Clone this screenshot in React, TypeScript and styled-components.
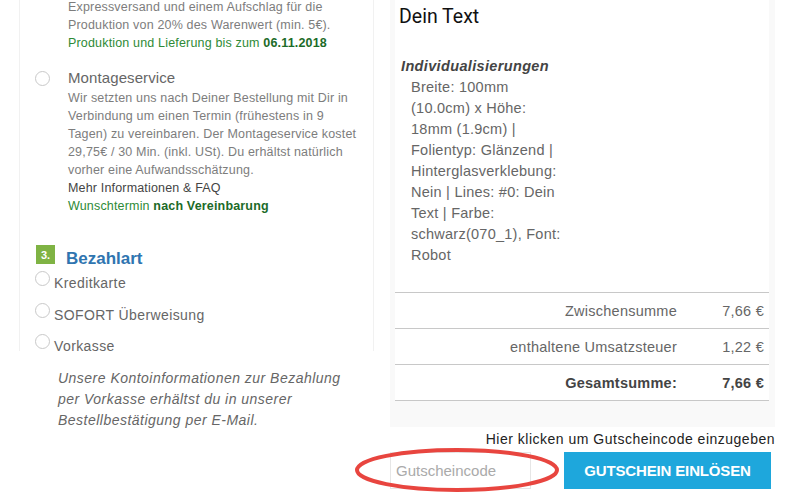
import React from "react";
import styled, { createGlobalStyle } from "styled-components";

const GlobalStyle = createGlobalStyle`
    html, body {
        margin: 0;
        padding: 0;
        background: #fff;
    }
    * {
        box-sizing: border-box;
    }
`;

const Page = styled.div`
    position: relative;
    display: flex;
    width: 800px;
    height: 499px;
    overflow: hidden;
    font-family: "Liberation Sans", Arial, sans-serif;
    color: #7d7d7d;
`;

const LeftColumn = styled.div`
    width: 390px;
    flex: none;
    padding-left: 19px;
`;

const OptionsPanel = styled.div`
    width: 355px;
    height: 353px;
    margin-top: -2px;
    padding-left: 15px;
    border-left: 1px solid #f1f1f1;
    border-right: 1px solid #f1f1f1;
`;

const Option = styled.div`
    display: flex;
    margin-bottom: 17px;
`;

const Radio = styled.span`
    flex: none;
    display: block;
    width: 15px;
    height: 15px;
    border: 1px solid #c9c9c9;
    border-radius: 50%;
    background: #fff;
`;

const OptionRadioSlot = styled.div`
    width: 33px;
    flex: none;
    padding-top: 2px;
`;

const OptionBody = styled.div`
    font-size: 12.5px;
    line-height: 18px;
    letter-spacing: 0.17px;
`;

const OptionTitle = styled.div`
    margin-bottom: 3px;
    font-size: 15px;
    line-height: 17px;
    letter-spacing: 0.1px;
    color: #666;
`;

const Link = styled.div`
    color: #444;
`;

const Green = styled.div`
    color: #2e8a36;

    b {
        color: #1c6b28;
    }
`;

const SectionHead = styled.div`
    display: flex;
    align-items: flex-start;
    height: 25px;
    margin-top: 31px;
    margin-left: 1px;
`;

const StepBadge = styled.span`
    flex: none;
    display: flex;
    align-items: center;
    justify-content: center;
    width: 19px;
    height: 19px;
    margin-top: -1px;
    background: #7fb344;
    color: #fff;
    font-size: 11px;
    font-weight: 700;
`;

const SectionTitle = styled.h3`
    margin: 3px 0 0 11px;
    font-size: 17px;
    line-height: 19px;
    font-weight: 700;
    color: #2f75b0;
`;

const PayRow = styled.div`
    display: flex;
    height: 31.5px;
    font-size: 14px;
    color: #666;

    span:last-child {
        margin: 4px 0 0 4px;
        letter-spacing: 0.4px;
    }
`;

const PayNote = styled.p`
    margin: 17px 0 0 39px;
    width: 290px;
    font-size: 14px;
    font-style: italic;
    line-height: 21px;
    letter-spacing: 0.48px;
    color: #666;
`;

const RightColumn = styled.div`
    width: 385px;
    flex: none;
`;

const Summary = styled.div`
    height: 427px;
    padding: 0 6px 0 5px;
    background: #f9f9f9;
`;

const ItemCard = styled.div`
    height: 292px;
    padding: 6px 5px 0 4px;
    background: #fff;
`;

const ItemTitle = styled.div`
    font-family: Roboto, "Liberation Sans", sans-serif;
    font-size: 19.5px;
    line-height: 22px;
    color: #111;
`;

const Details = styled.div`
    margin-top: 28px;
    font-size: 14.5px;
    line-height: 21px;
`;

const DetailsHead = styled.div`
    margin-left: 2px;
    font-weight: 700;
    font-style: italic;
    letter-spacing: 0.35px;
    color: #444;
`;

const DetailsText = styled.div`
    width: 153px;
    margin-left: 12px;
    letter-spacing: 0.25px;
    color: #666;
`;

const TotalRow = styled.div<{ $strong?: boolean }>`
    display: flex;
    justify-content: flex-end;
    align-items: center;
    height: 36px;
    border-bottom: 1px solid #c8c8c8;
    background: #fff;
    font-size: 14.5px;
    letter-spacing: 0.25px;
    font-weight: ${(props) => (props.$strong ? 700 : 400)};
    color: ${(props) => (props.$strong ? "#444" : "#666")};

    &:first-child {
        height: 37px;
        border-top: 1px solid #c8c8c8;
    }

    span:last-child {
        width: 92px;
        padding-right: 5px;
        text-align: right;
    }
`;

const CouponHint = styled.div`
    position: absolute;
    top: 431px;
    right: 25px;
    font-size: 14px;
    line-height: 17px;
    letter-spacing: 0.5px;
    color: #222;
`;

const CouponForm = styled.div`
    position: absolute;
    top: 452px;
    left: 390px;
    display: flex;
    gap: 33px;
`;

const CouponInput = styled.input`
    width: 141px;
    height: 37px;
    padding: 0 5px;
    border: 1px solid #e6e6e6;
    border-radius: 0;
    outline: none;
    background: #fff;
    font-family: "Liberation Sans", Arial, sans-serif;
    font-size: 15px;

    &::placeholder {
        color: #aaa;
        opacity: 1;
    }
`;

const CouponButton = styled.button`
    width: 207px;
    height: 37px;
    padding: 0;
    border: none;
    background: #1ea7dc;
    color: #fff;
    font-family: "Liberation Sans", Arial, sans-serif;
    font-size: 15px;
    font-weight: 700;
    letter-spacing: -0.15px;
`;

const Marker = styled.svg`
    position: absolute;
    top: 445px;
    left: 352px;
    pointer-events: none;
`;

const App = () => {
    return (
        <Page>
            <GlobalStyle />
            <LeftColumn>
                <OptionsPanel>
                    <Option>
                        <OptionRadioSlot />
                        <OptionBody>
                            Expressversand und einem Aufschlag für die
                            <br />
                            Produktion von 20% des Warenwert (min. 5€).
                            <Green>
                                Produktion und Lieferung bis zum <b>06.11.2018</b>
                            </Green>
                        </OptionBody>
                    </Option>
                    <Option>
                        <OptionRadioSlot>
                            <Radio />
                        </OptionRadioSlot>
                        <OptionBody>
                            <OptionTitle>Montageservice</OptionTitle>
                            Wir setzten uns nach Deiner Bestellung mit Dir in
                            <br />
                            Verbindung um einen Termin (frühestens in 9
                            <br />
                            Tagen) zu vereinbaren. Der Montageservice kostet
                            <br />
                            29,75€ / 30 Min. (inkl. USt). Du erhältst natürlich
                            <br />
                            vorher eine Aufwandsschätzung.
                            <Link>Mehr Informationen &amp; FAQ</Link>
                            <Green>
                                Wunschtermin <b>nach Vereinbarung</b>
                            </Green>
                        </OptionBody>
                    </Option>
                    <SectionHead>
                        <StepBadge>3.</StepBadge>
                        <SectionTitle>Bezahlart</SectionTitle>
                    </SectionHead>
                    <div>
                        <PayRow>
                            <Radio />
                            <span>Kreditkarte</span>
                        </PayRow>
                        <PayRow>
                            <Radio />
                            <span>SOFORT Überweisung</span>
                        </PayRow>
                        <PayRow>
                            <Radio />
                            <span>Vorkasse</span>
                        </PayRow>
                    </div>
                </OptionsPanel>
                <PayNote>
                    Unsere Kontoinformationen zur Bezahlung per Vorkasse erhältst du in unserer
                    Bestellbestätigung per E-Mail.
                </PayNote>
            </LeftColumn>
            <RightColumn>
                <Summary>
                    <ItemCard>
                        <ItemTitle>Dein Text</ItemTitle>
                        <Details>
                            <DetailsHead>Individualisierungen</DetailsHead>
                            <DetailsText>
                                Breite: 100mm (10.0cm) x Höhe: 18mm (1.9cm) | Folientyp: Glänzend |
                                Hinterglasverklebung: Nein | Lines: #0: Dein Text | Farbe:
                                schwarz(070_1), Font: Robot
                            </DetailsText>
                        </Details>
                    </ItemCard>
                    <div>
                        <TotalRow>
                            <span>Zwischensumme</span>
                            <span>7,66 €</span>
                        </TotalRow>
                        <TotalRow>
                            <span>enthaltene Umsatzsteuer</span>
                            <span>1,22 €</span>
                        </TotalRow>
                        <TotalRow $strong>
                            <span>Gesamtsumme:</span>
                            <span>7,66 €</span>
                        </TotalRow>
                    </div>
                </Summary>
            </RightColumn>
            <CouponHint>Hier klicken um Gutscheincode einzugeben</CouponHint>
            <CouponForm>
                <CouponInput placeholder="Gutscheincode" readOnly />
                <CouponButton>GUTSCHEIN EINLÖSEN</CouponButton>
            </CouponForm>
            <Marker width="212" height="50" viewBox="0 0 212 50">
                <ellipse cx="105" cy="25" rx="100" ry="20" fill="none" stroke="#e8453f" strokeWidth="4" />
            </Marker>
        </Page>
    );
};

export default App;
